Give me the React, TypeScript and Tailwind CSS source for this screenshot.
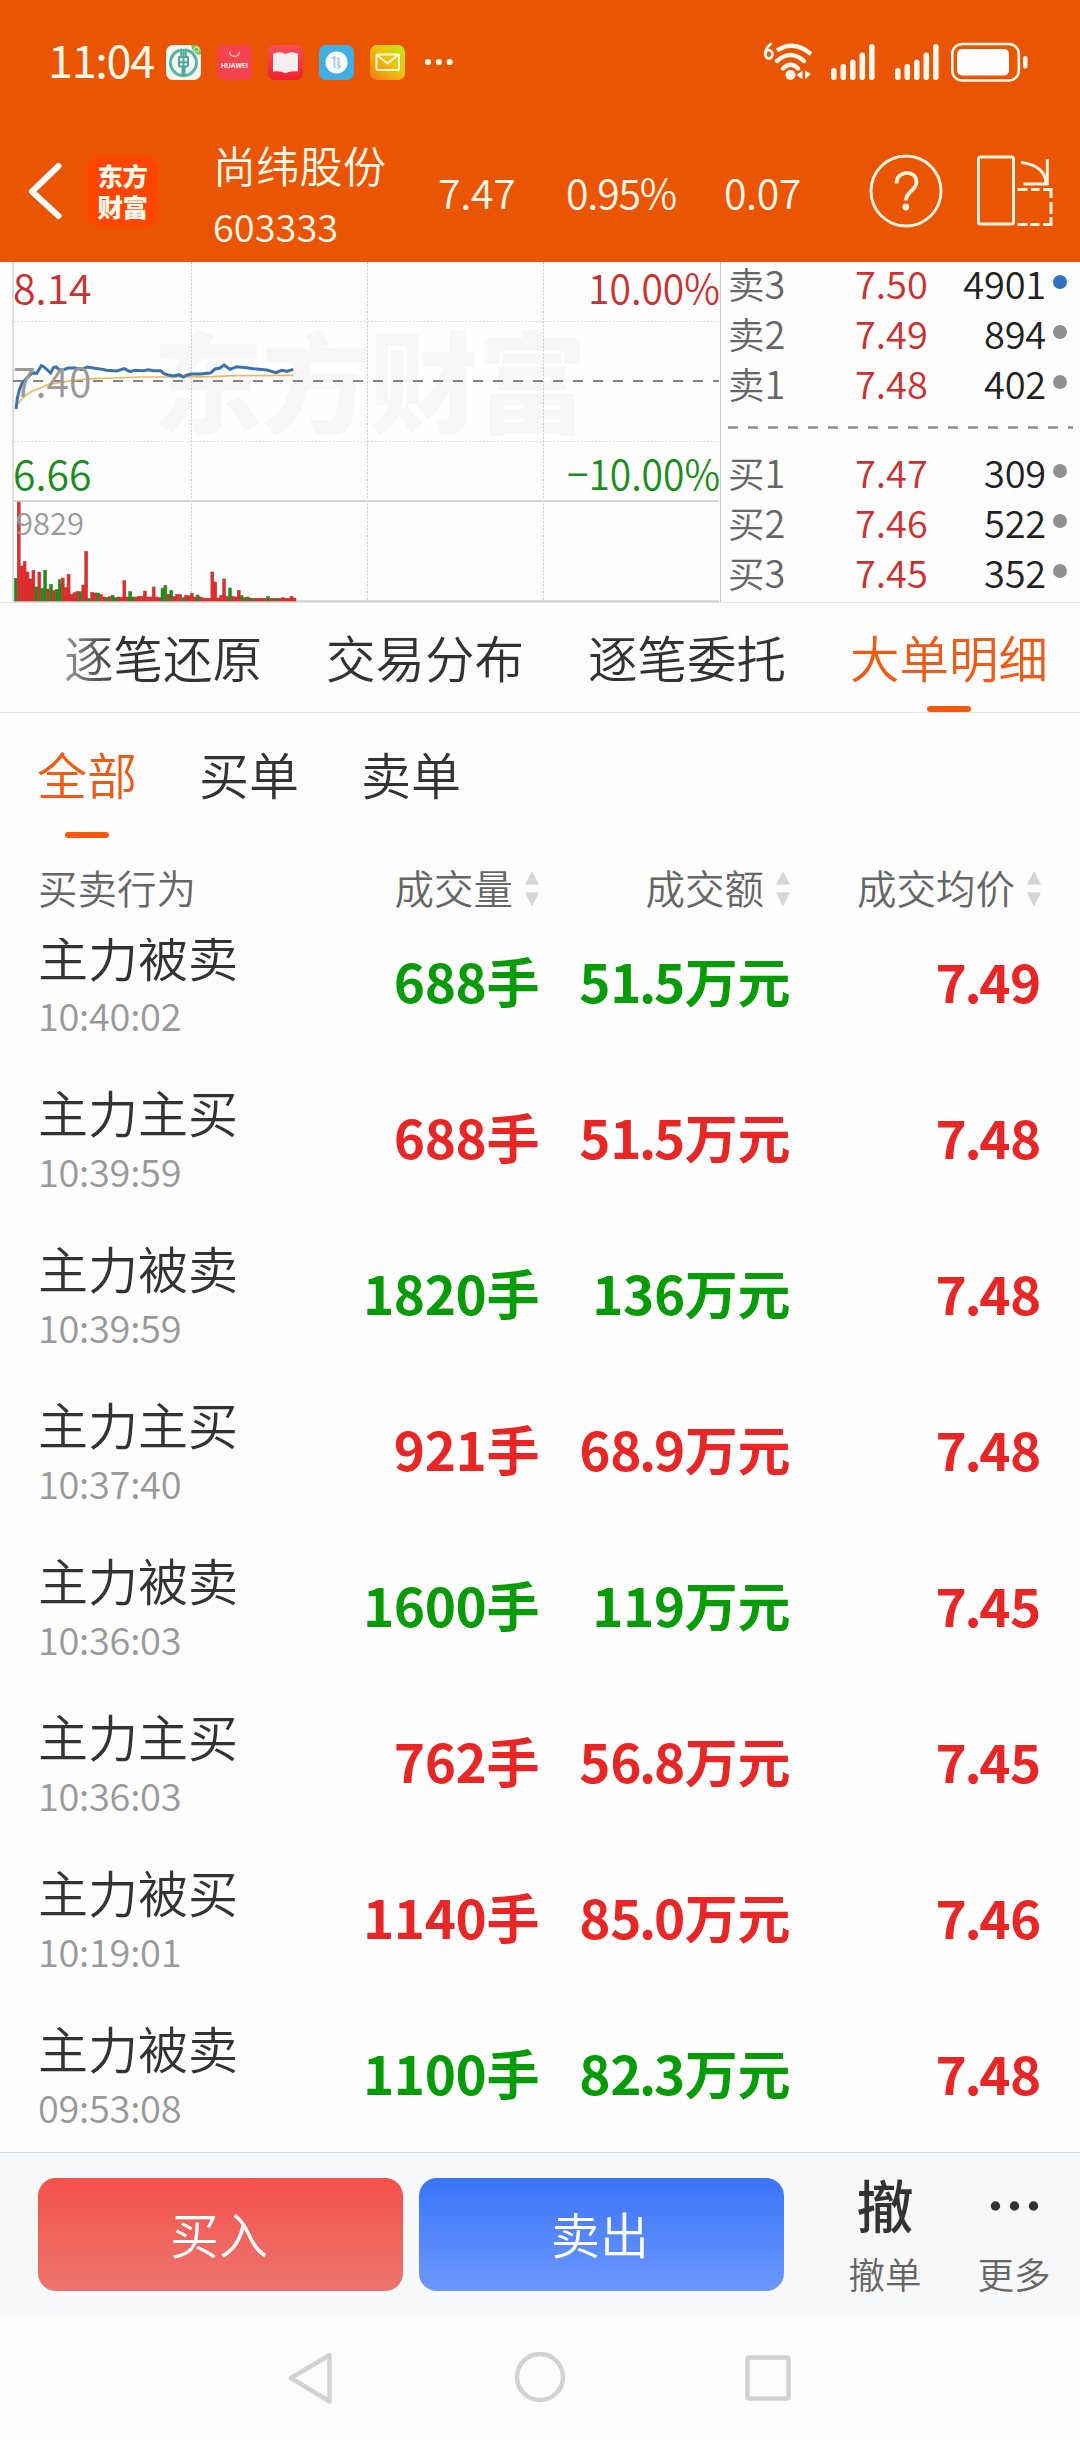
import React from "react";

type Tone = "red" | "green";

const toneClass: Record<Tone, string> = {
  red: "text-[#e82626]",
  green: "text-[#079c07]",
};

const trades: { name: string; time: string; volume: string; amount: string; price: string; tone: Tone }[] = [
  { name: "主力被卖", time: "10:40:02", volume: "688手", amount: "51.5万元", price: "7.49", tone: "green" },
  { name: "主力主买", time: "10:39:59", volume: "688手", amount: "51.5万元", price: "7.48", tone: "red" },
  { name: "主力被卖", time: "10:39:59", volume: "1820手", amount: "136万元", price: "7.48", tone: "green" },
  { name: "主力主买", time: "10:37:40", volume: "921手", amount: "68.9万元", price: "7.48", tone: "red" },
  { name: "主力被卖", time: "10:36:03", volume: "1600手", amount: "119万元", price: "7.45", tone: "green" },
  { name: "主力主买", time: "10:36:03", volume: "762手", amount: "56.8万元", price: "7.45", tone: "red" },
  { name: "主力被买", time: "10:19:01", volume: "1140手", amount: "85.0万元", price: "7.46", tone: "red" },
  { name: "主力被卖", time: "09:53:08", volume: "1100手", amount: "82.3万元", price: "7.48", tone: "green" },
];

const asks = [
  { label: "卖3", price: "7.50", volume: "4901", active: true },
  { label: "卖2", price: "7.49", volume: "894", active: false },
  { label: "卖1", price: "7.48", volume: "402", active: false },
];

const bids = [
  { label: "买1", price: "7.47", volume: "309", active: false },
  { label: "买2", price: "7.46", volume: "522", active: false },
  { label: "买3", price: "7.45", volume: "352", active: false },
];

/* Minute volumes: colour letter followed by the bar height. */
const volumeBars =
  "g68 r297 r105 r118 r87 r66 r92 g42 r87 g38 g92 r36 g50 r32 g35 g64 r69 r40 r80 r20 r25 r28 g28 r48 r149 g8 r26 r24 g24 r20 r12 g11 r13 g17 g10 r12 r11 r61 r12 g28 g12 r12 r14 r14 r30 r12 r12 r42 r12 r10 g38 g47 r20 g32 r14 r20 r20 g10 r17 r16 r23 r12 g18 r12 r9 r8 r8 r87 r57 r9 r17 r66 r14 g39 r14 r12 r32 g16 r10 g12 r9 g8 r8 r8 r8 r8 g13 r8 r8 g8 r8 r10 r8 r8 r14 r9"
    .split(" ")
    .map((s) => ({ up: s[0] === "r", h: Number(s.slice(1)) }));

const priceLine =
  "48,462 52,430 58,405 66,385 75,375 88,362 97,354 110,355 118,342 124,332 132,336 142,345 152,354 160,338 168,336 178,344 190,344 205,339 225,339 245,344 262,336 285,340 305,343 320,346 350,348 373,341 390,350 405,346 430,347 445,344 460,347 482,347 492,356 505,360 520,363 538,359 550,366 562,360 575,357 600,357 625,355 633,353 645,342 660,339 672,330 690,343 710,335 740,338 760,341 800,345 828,353 845,346 860,349 880,343";
const averageLine =
  "55,446 62,436 78,420 98,408 120,400 140,390 165,385 200,379 235,375 280,371 340,369 420,366 520,366 640,365 700,362 880,361";

function AppIcons() {
  return (
    <div className="flex gap-[16px]">
      <svg width="35" height="35" viewBox="0 0 35 35">
        <rect width="35" height="35" rx="7" fill="#f3f6f4" />
        <path d="M25 0h3a7 7 0 0 1 7 7v3q-9-1-10-10z" fill="#6cc24a" />
        <circle cx="30.5" cy="4.5" r="2.6" fill="none" stroke="#e9f6e4" strokeWidth="1" />
        <path d="M14 5.2A13 13 0 1 0 21 5.2" fill="none" stroke="#5bb5a3" strokeWidth="3" />
        <path d="M15.2 3.5v8.500M19.800 3.500v8.500M17.500 4v27M12.500 12h10M13 17.200h9M13 21.500h9M13 12v9.500M22 12v9.500" fill="none" stroke="#4ca897" strokeWidth="2" />
        <path d="M17.500 21v10" stroke="#4ca897" strokeWidth="4" />
      </svg>
      <svg width="35" height="35" viewBox="0 0 35 35">
        <rect width="35" height="35" rx="7" fill="#f4424f" />
        <path d="M12.500 6.500c.5 6.500 9.500 6.500 10 0" fill="none" stroke="#fbd5d6" strokeWidth="1.200" />
        <text x="17.500" y="22.500" textAnchor="middle" fontSize="6.600" fontWeight="700" fill="#fdeeee" fontFamily="Inter, sans-serif" textLength="27" lengthAdjust="spacingAndGlyphs">HUAWEI</text>
      </svg>
      <svg width="35" height="35" viewBox="0 0 35 35">
        <defs>
          <linearGradient id="book" x1="0" y1="0" x2="0" y2="1">
            <stop offset="0" stopColor="#f75059" />
            <stop offset="1" stopColor="#ee2030" />
          </linearGradient>
        </defs>
        <rect width="35" height="35" rx="7" fill="url(#book)" />
        <path d="M7 8q5.500-1.800 10.500 1Q22.500 6.200 28 8l2 1v17.500q-7-1-12.500 1.700Q12 25.500 5 26.500V9z" fill="#f4eeee" />
      </svg>
      <svg width="35" height="35" viewBox="0 0 35 35">
        <rect width="35" height="35" rx="7" fill="#42afe3" />
        <circle cx="17.500" cy="17.500" r="11" fill="#fff" />
        <path d="M12.500 13.500l3-1.500v11M19.500 12v11l2.500-2" fill="none" stroke="#a4d2ea" strokeWidth="2" />
      </svg>
      <svg width="35" height="35" viewBox="0 0 35 35">
        <defs>
          <linearGradient id="mail" x1="1" y1="0" x2="0" y2="1">
            <stop offset="0" stopColor="#bfe816" />
            <stop offset="0.450" stopColor="#efc30d" />
            <stop offset="1" stopColor="#f47a13" />
          </linearGradient>
        </defs>
        <rect width="35" height="35" rx="7" fill="url(#mail)" />
        <rect x="6.500" y="9.500" width="22.500" height="15.500" rx="1" fill="none" stroke="#fff8d8" strokeWidth="2" />
        <path d="M7.500 10.500l10 8 10-8" fill="none" stroke="#fff8d8" strokeWidth="2" />
      </svg>
    </div>
  );
}

function Signal() {
  return (
    <svg width="44" height="36" viewBox="0 0 44 36" fill="#fff8ea">
      <rect x="0" y="24" width="5.600" height="12" rx="2.800" />
      <rect x="9.500" y="20" width="5.600" height="16" rx="2.800" />
      <rect x="19" y="15.500" width="5.600" height="20.500" rx="2.800" />
      <rect x="28.500" y="8.500" width="5.600" height="27.500" rx="2.800" />
      <rect x="38" y="0" width="5.600" height="36" rx="2.800" />
    </svg>
  );
}

function StatusBar() {
  return (
    <div className="flex h-[124px] items-center pl-[48px] pr-[52px]">
      <div className="w-[118px] whitespace-nowrap pb-[7px] text-[45px] font-normal leading-[60px] tracking-[-1.3px]">11:04</div>
      <AppIcons />
      <svg className="ml-[19px]" width="30" height="8" viewBox="0 0 30 8" fill="#fff8ea">
        <circle cx="4" cy="4" r="3.100" />
        <circle cx="14.800" cy="4" r="3.100" />
        <circle cx="25.600" cy="4" r="3.100" />
      </svg>
      <div className="ml-auto flex items-center">
        <svg width="52" height="40" viewBox="0 0 52 40" fill="none" stroke="#fff8ea" strokeLinecap="round">
          <path d="M7.800 2C4 5 2.200 8 2.200 12" strokeWidth="2.800" />
          <ellipse cx="5.800" cy="12.300" rx="3.600" ry="4.200" strokeWidth="2.800" />
          <path d="M14 8.500Q31-2.500 48 12" strokeWidth="4.400" strokeLinecap="butt" />
          <path d="M14 19Q27.500 7 41 19" strokeWidth="4.400" />
          <path d="M20 26.500Q27.500 19 35 26.500" strokeWidth="4.400" />
          <circle cx="27.500" cy="33" r="5" fill="#fff8ea" stroke="none" />
          <path d="M39.500 28.500v9l-6-4.500zM42 28.500v9l6-5.500z" fill="#fff8ea" stroke="none" />
        </svg>
        <div className="ml-[16px]"><Signal /></div>
        <div className="ml-[20px]"><Signal /></div>
        <svg className="ml-[12px]" width="77" height="40" viewBox="0 0 77 40">
          <rect x="1.300" y="2" width="66.500" height="36.500" rx="10" fill="none" stroke="#fff8ea" strokeWidth="2.600" />
          <rect x="6" y="7" width="52" height="26.500" rx="5" fill="#fff" />
          <rect x="72" y="14" width="4.500" height="12.500" rx="2" fill="#fff8ea" />
        </svg>
      </div>
    </div>
  );
}

function TitleBar() {
  return (
    <div className="flex h-[134px] items-center pl-[28px]">
      <svg width="35" height="58" viewBox="0 0 35 58">
        <path d="M30.500 4L4 29.500 30.500 54" fill="none" stroke="#fff" strokeWidth="6" strokeLinecap="round" strokeLinejoin="round" />
      </svg>
      <div className="ml-[24px] flex size-[71px] flex-col items-center justify-center rounded-[13px] bg-[#ff4500] pb-[3px] text-[25.5px] font-black leading-[31px] tracking-[-0.5px]">
        <span>东方</span>
        <span>财富</span>
      </div>
      <div className="ml-[55px] mt-[8px] w-[225px] whitespace-nowrap">
        <div className="text-[43px] leading-[62px] tracking-[0.3px]">尚纬股份</div>
        <div className="text-[38px] leading-[62px]">603333</div>
      </div>
      <div className="w-[128px] text-[41px] leading-[60px] tracking-[-0.3px]">7.47</div>
      <div className="w-[158px] text-[41px] leading-[60px] tracking-[-1.2px]">0.95%</div>
      <div className="w-[145px] text-[41px] leading-[60px] tracking-[-0.4px]">0.07</div>
      <svg width="74" height="74" viewBox="0 0 74 74" fill="none" stroke="#fff3df">
        <circle cx="37" cy="37" r="35" strokeWidth="3" />
        <path d="M27.500 29.500c0-14 20-14 20-1.500 0 8-10 9.500-10.500 17.500v1" strokeWidth="3.800" />
        <circle cx="36.800" cy="53" r="3.400" fill="#fff3df" stroke="none" />
      </svg>
      <svg className="ml-[34px]" width="76" height="72" viewBox="0 0 76 72" fill="none" stroke="#fff3df" strokeWidth="3">
        <rect x="1.500" y="2" width="35" height="67" rx="2" />
        <path d="M44 7.500C60 9 69 17 69 29M70.300 4v25H46.500" />
        <path d="M40.500 34.500h10M54 34.500h8.500M66 34.500h8v8.500M74 47v12M74 62v7.500h-8M62.500 69.500H53M50.500 69.500h-10" />
      </svg>
    </div>
  );
}

function MinuteChart() {
  return (
    <svg width="721" height="340" viewBox="0 0 721 340" className="shrink-0" fontSize="41">
      <text x="153" y="163" fontSize="110" fontWeight="900" fill="#f7f7f7" textLength="434">东方财富</text>
      <g stroke="#dcdcdc" strokeWidth="1" strokeDasharray="2 1.500">
        <path d="M14 59.500H719M14 179.500H719" />
        <path d="M191.500 0V338M367.500 0V338M543.500 0V338" stroke="#c9c9c9" />
      </g>
      <path d="M13 0V339" stroke="#dedede" strokeWidth="2" />
      <path d="M13 239H719M13 339H719" stroke="#d7d7d7" strokeWidth="2" />
      <path d="M720.500 0V340" stroke="#c8c8c8" strokeWidth="1" />
      <path d="M13 119H719" stroke="#858585" strokeWidth="2" strokeDasharray="10 10" />
      <g transform="scale(0.33333) translate(0 -21)">
        {volumeBars.map((b, i) => (
          <rect key={i} x={43 + i * 8.8} y={1038 - b.h} width={8.8} height={b.h} fill={b.up ? "#e62a2a" : "#179017"} stroke={b.up ? "#b53434" : "#3c7a1c"} strokeWidth="1.500" />
        ))}
        <polyline points={averageLine} fill="none" stroke="#ecb95c" strokeWidth="5" />
        <polyline points={priceLine} fill="none" stroke="#3b72ae" strokeWidth="9" />
      </g>
      <text x="13" y="42" fill="#c93232">8.14</text>
      <text x="588" y="42" fill="#c93232" textLength="132" lengthAdjust="spacingAndGlyphs">10.00%</text>
      <text x="13" y="135" fill="#999">7.40</text>
      <text x="13" y="228" fill="#1b8d1b">6.66</text>
      <text x="567" y="228" fill="#1b8d1b" textLength="153" lengthAdjust="spacingAndGlyphs">−10.00%</text>
      <text x="16" y="273" fontSize="31" fill="#999">9829</text>
    </svg>
  );
}

function BookRow({ label, price, volume, active }: { label: string; price: string; volume: string; active: boolean }) {
  return (
    <div className="flex h-[50px] items-center whitespace-nowrap text-[38px] leading-[50px]">
      <div className="w-[127px] text-[#666]"><span className="text-[36.5px]">{label[0]}</span>{label[1]}</div>
      <div className="w-[80px] text-[#cc3030]">{price}</div>
      <div className="w-[111px] text-right tracking-[-0.2px] text-[#222]">{volume}</div>
      <div className={active ? "ml-[7px] mb-[2px] size-[14px] rounded-full bg-[#2f70c0]" : "ml-[7px] mb-[2px] size-[14px] rounded-full bg-[#8f8f94]"} />
    </div>
  );
}

function OrderBook() {
  return (
    <div className="flex-1 pl-[7px]">
      <div className="-mt-[4px] h-[150px]">
        {asks.map((r) => <BookRow key={r.label} {...r} />)}
      </div>
      <svg className="mt-[18px] block" width="345" height="3" viewBox="0 0 345 3">
        <path d="M0 1.500H345" stroke="#8d8d8d" strokeWidth="2.500" strokeDasharray="10 10" />
      </svg>
      <div className="mt-[18px]">
        {bids.map((r) => <BookRow key={r.label} {...r} />)}
      </div>
    </div>
  );
}

function SortArrows() {
  return (
    <svg width="14" height="36" viewBox="0 0 14 36" fill="#d6d6d6" className="ml-[12px]">
      <path d="M7 1.500l6 11.500H1zM7 34L1 22h12z" stroke="#d6d6d6" strokeWidth="1.500" strokeLinejoin="round" />
    </svg>
  );
}

function ColumnTitle({ children, className }: { children: string; className: string }) {
  return (
    <div className={"flex items-center justify-end " + className}>
      <span className="-mt-[4px]">{children}</span>
      <SortArrows />
    </div>
  );
}

/* Bold figure whose decimal point sits tight between its digits. */
function Figure({ value, className }: { value: string; className: string }) {
  const [whole, fraction] = value.split(".");
  return (
    <div className={"text-right text-[53px] font-bold leading-[80px] tracking-[-0.4px] " + className}>
      {whole}
      {fraction !== undefined && <span className="-mx-[2px]">.</span>}
      {fraction}
    </div>
  );
}

export default function App() {
  return (
    <div className="flex h-[2440px] w-[1080px] flex-col overflow-hidden bg-[#fefefe] font-['Noto_Sans_CJK_SC',sans-serif] font-[350] text-[#333]">
      <header className="h-[262px] shrink-0 bg-[#ea5504] text-[#fff8ea]">
        <StatusBar />
        <TitleBar />
      </header>

      <section className="flex h-[341px] shrink-0 border-b border-[#e2e2e2]">
        <MinuteChart />
        <OrderBook />
      </section>

      <nav className="flex h-[110px] shrink-0 justify-between border-b border-[#e0e0e0] pl-[64px] pr-[32px] text-[49.5px] leading-[107px]">
        <div className="bg-gradient-to-r from-[#999] to-[#333] to-[28%] bg-clip-text text-transparent">逐笔还原</div>
        <div>交易分布</div>
        <div>逐笔委托</div>
        <div className="relative text-[#f05a14]">
          大单明细
          <div className="absolute bottom-0 left-[77px] h-[6px] w-[44px] rounded-full bg-[#fa5a0a]" />
        </div>
      </nav>

      <nav className="flex h-[126px] shrink-0 gap-[62px] pl-[37px] text-[50px] leading-[121px]">
        <div className="relative text-[#f05a14]">
          全部
          <div className="absolute bottom-[1px] left-[28px] h-[6px] w-[44px] rounded-full bg-[#fa5a0a]" />
        </div>
        <div>买单</div>
        <div>卖单</div>
      </nav>

      <div className="flex h-[99px] shrink-0 items-center pl-[38px] text-[39.5px] leading-[60px] text-[#666]">
        <div className="-mt-[4px] w-[201px]">买卖行为</div>
        <ColumnTitle className="w-[300px]">成交量</ColumnTitle>
        <ColumnTitle className="w-[251px]">成交额</ColumnTitle>
        <ColumnTitle className="w-[251px]">成交均价</ColumnTitle>
      </div>

      <main className="h-[1214px] shrink-0 overflow-hidden">
        <div className="-mt-[36px]">
          {trades.map((t, i) => (
            <div key={i} className="flex h-[156px] items-center whitespace-nowrap pl-[38px]">
              <div className="mt-[10px] w-[201px]">
                <div className="text-[50px] leading-[60px]">{t.name}</div>
                <div className="text-[38px] leading-[60px] tracking-[-0.3px] text-[#999]">{t.time}</div>
              </div>
              <Figure value={t.volume} className={"w-[300px] " + toneClass[t.tone]} />
              <Figure value={t.amount} className={"w-[251px] " + toneClass[t.tone]} />
              <Figure value={t.price} className="w-[251px] text-[#e82626]" />
            </div>
          ))}
        </div>
      </main>

      <footer className="flex h-[164px] shrink-0 border-t border-[#d2d5d6] bg-[#f7f8fa] pl-[38px] pt-[25px]">
        <button className="h-[113px] w-[365px] rounded-[18px] bg-gradient-to-b from-[#f4504a] to-[#ec746e] pb-[3px] pr-[3px] text-[49px] text-white">买入</button>
        <button className="ml-[16px] h-[113px] w-[365px] rounded-[18px] bg-gradient-to-b from-[#3974f8] to-[#6c97ff] pb-[3px] pr-[3px] text-[49px] text-white">卖出</button>
        <div className="ml-[51px] flex w-[100px] flex-col items-center">
          <div className="-mt-[7px] text-[57px] font-medium leading-[64px]">撤</div>
          <div className="mt-[14px] text-[36.5px] leading-[50px] text-[#666]">撤单</div>
        </div>
        <div className="ml-[29px] flex w-[100px] flex-col items-center">
          <svg width="50" height="57" viewBox="0 0 50 57" fill="#333">
            <circle cx="6.500" cy="28" r="4.700" />
            <circle cx="25.500" cy="28" r="4.700" />
            <circle cx="44.500" cy="28" r="4.700" />
          </svg>
          <div className="mt-[14px] text-[36.5px] leading-[50px] text-[#666]">更多</div>
        </div>
      </footer>

      <div className="flex h-[124px] shrink-0 items-center bg-[#fcfcfc] pl-[287px]">
        <svg width="46" height="54" viewBox="0 0 46 54" fill="none" stroke="#d2d2d2" strokeWidth="4.500" strokeLinejoin="round">
          <path d="M42.500 4v46.500L4 27z" />
        </svg>
        <svg className="ml-[181px]" width="52" height="52" viewBox="0 0 52 52" fill="none" stroke="#d2d2d2" strokeWidth="4.500">
          <circle cx="26" cy="25" r="23" />
        </svg>
        <svg className="ml-[179px]" width="46" height="46" viewBox="0 0 46 46" fill="none" stroke="#d2d2d2" strokeWidth="4.500">
          <rect x="2.500" y="2.500" width="41" height="41" rx="1.500" />
        </svg>
      </div>
    </div>
  );
}
